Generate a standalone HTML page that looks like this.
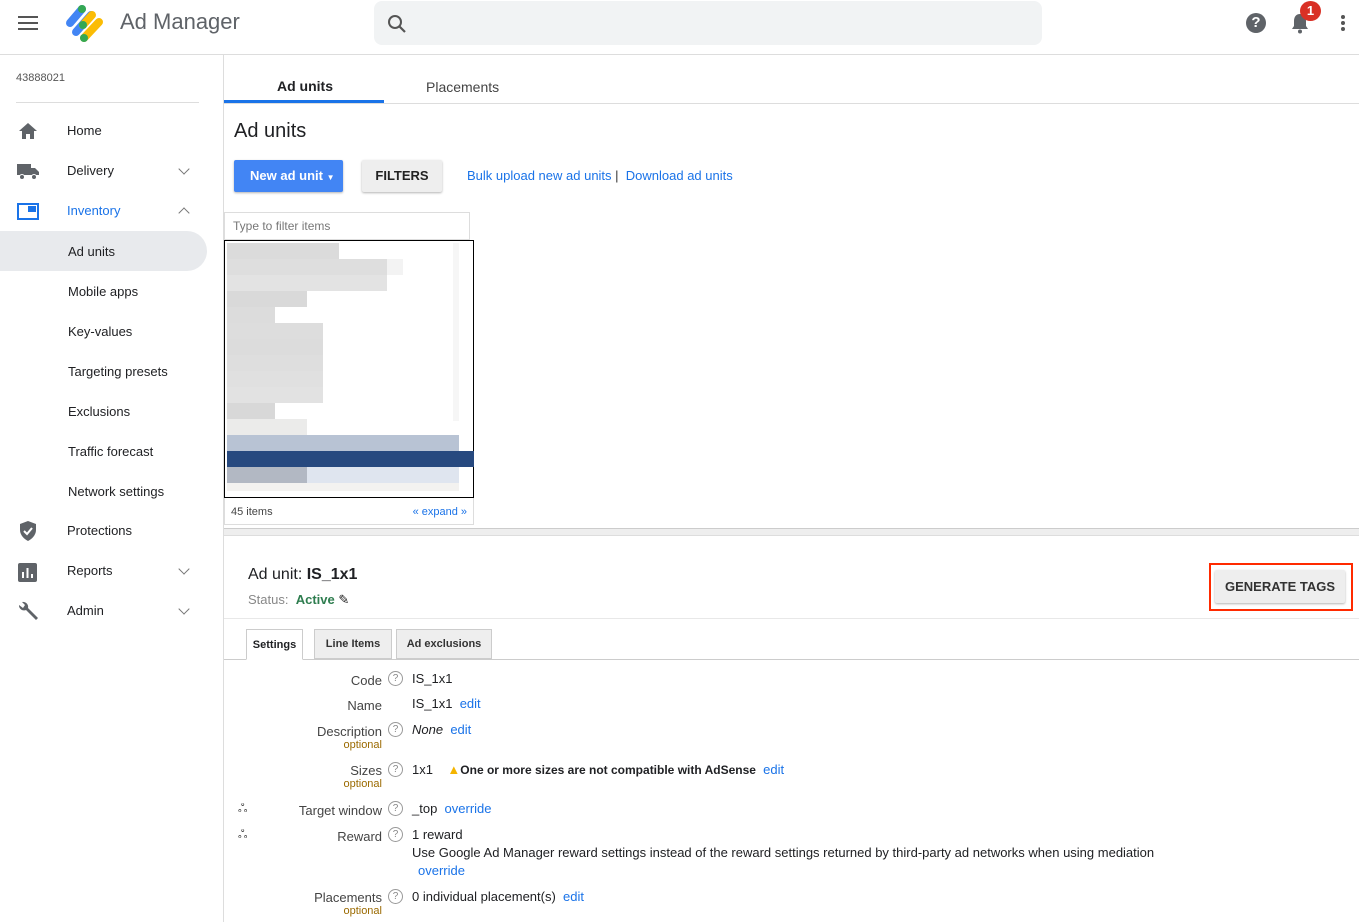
<!DOCTYPE html>
<html><head><meta charset="utf-8"><style>
*{box-sizing:border-box;margin:0;padding:0}
body{width:1359px;height:922px;overflow:hidden;background:#fff;font-family:"Liberation Sans",Arial,sans-serif;color:#202124;position:relative}
.a{position:absolute}
.nav{position:absolute;left:67px;font-size:13px;color:#202124}
.sub{position:absolute;left:68px;font-size:13px;color:#202124}
.chev{position:absolute;left:180px;width:8px;height:8px;border-right:1.5px solid #777;border-bottom:1.5px solid #777;transform:rotate(45deg)}
.blk{position:absolute;height:16px}
.lbl{position:absolute;right:977px;font-size:13px;color:#444;text-align:right}
.opt{position:absolute;right:977px;font-size:11px;color:#9b6a00}
.q{position:absolute;left:388px;width:15px;height:15px;border:1px solid #999;border-radius:50%;font-size:10px;color:#888;text-align:center;line-height:13px}
.val{position:absolute;left:412px;font-size:13px;color:#202124}
.lnk{color:#1a73e8}
</style></head><body>
<div class="a" style="left:18px;top:16px;width:20px;height:2px;background:#555;box-shadow:0 6px 0 #555,0 12px 0 #555"></div>
<svg class="a" style="left:62px;top:2px" width="44" height="42" viewBox="0 0 44 42">
<line x1="8" y1="21" x2="20" y2="7" stroke="#4285f4" stroke-width="8" stroke-linecap="round"/>
<line x1="14" y1="30" x2="29" y2="13" stroke="#4285f4" stroke-width="8" stroke-linecap="round"/>
<line x1="22" y1="36" x2="37" y2="20" stroke="#fbbc04" stroke-width="8" stroke-linecap="round"/>
<line x1="21" y1="23" x2="30" y2="13" stroke="#fbbc04" stroke-width="8" stroke-linecap="round"/>
<circle cx="20" cy="7" r="4" fill="#34a853"/><circle cx="21" cy="23" r="4" fill="#34a853"/><circle cx="22" cy="36" r="4" fill="#34a853"/>
</svg>
<div class="a" style="left:120px;top:9px;font-size:22px;color:#5f6368">Ad Manager</div>
<div class="a" style="left:374px;top:1px;width:668px;height:44px;background:#f1f3f4;border-radius:8px"></div>
<svg class="a" style="left:387px;top:14px" width="20" height="20" viewBox="0 0 20 20"><circle cx="8" cy="8" r="6" fill="none" stroke="#555" stroke-width="2"/><line x1="12.5" y1="12.5" x2="18" y2="18" stroke="#555" stroke-width="2.2"/></svg>
<div class="a" style="left:1246px;top:13px;width:20px;height:20px;border-radius:50%;background:#5f6368;color:#fff;font-weight:bold;font-size:15px;text-align:center;line-height:20px">?</div>
<svg class="a" style="left:1289px;top:11px" width="22" height="24" viewBox="0 0 22 24"><path d="M11 3c-4 0-6 3-6 7v5l-2 3h16l-2-3v-5c0-4-2-7-6-7z" fill="#5f6368"/><circle cx="11" cy="20.5" r="2" fill="#5f6368"/></svg>
<div class="a" style="left:1300px;top:1px;width:21px;height:20px;border-radius:50%;background:#d93025;color:#fff;font-size:13px;font-weight:bold;text-align:center;line-height:20px">1</div>
<div class="a" style="left:1341px;top:15px;width:4px;height:4px;border-radius:50%;background:#555;box-shadow:0 6px 0 #555,0 12px 0 #555"></div>
<div class="a" style="left:0;top:54px;width:1359px;height:1px;background:#ddd"></div>
<div class="a" style="left:223px;top:55px;width:1px;height:867px;background:#ddd"></div>
<div class="a" style="left:16px;top:72px;font-size:11px;color:#555">43888021</div>
<div class="a" style="left:16px;top:102px;width:183px;height:1px;background:#ddd"></div>
<svg class="a" style="left:18px;top:122px" width="20" height="18" viewBox="0 0 20 18"><path d="M10 1L1 9h3v8h4v-5h4v5h4V9h3z" fill="#5f6368"/></svg>
<div class="nav" style="top:123px">Home</div>
<svg class="a" style="left:16px;top:162px" width="24" height="18" viewBox="0 0 24 18"><rect x="1" y="2" width="14" height="11" fill="#5f6368"/><path d="M15 6h4l4 4v3h-8z" fill="#5f6368"/><circle cx="6" cy="15" r="2.5" fill="#5f6368" stroke="#fff"/><circle cx="18" cy="15" r="2.5" fill="#5f6368" stroke="#fff"/></svg>
<div class="nav" style="top:163px">Delivery</div><div class="chev" style="top:165px"></div>
<div class="a" style="left:17px;top:203px;width:22px;height:17px;border:2px solid #1a73e8"></div>
<div class="a" style="left:28px;top:206px;width:8px;height:6px;background:#1a73e8"></div>
<div class="nav" style="top:203px;color:#1a73e8">Inventory</div><div class="chev" style="top:209px;transform:rotate(225deg)"></div>
<div class="a" style="left:0;top:231px;width:207px;height:40px;background:#e8eaed;border-radius:0 20px 20px 0"></div>
<div class="sub" style="top:244px">Ad units</div>
<div class="sub" style="top:284px">Mobile apps</div>
<div class="sub" style="top:324px">Key-values</div>
<div class="sub" style="top:364px">Targeting presets</div>
<div class="sub" style="top:404px">Exclusions</div>
<div class="sub" style="top:444px">Traffic forecast</div>
<div class="sub" style="top:484px">Network settings</div>
<svg class="a" style="left:18px;top:520px" width="20" height="22" viewBox="0 0 20 22"><path d="M10 1L2 4v6c0 5 4 9 8 11 4-2 8-6 8-11V4z" fill="#5f6368"/><path d="M6 11l3 3 5-6" stroke="#fff" stroke-width="2" fill="none"/></svg>
<div class="nav" style="top:523px">Protections</div>
<svg class="a" style="left:18px;top:563px" width="19" height="19" viewBox="0 0 19 19"><rect width="19" height="19" rx="2" fill="#5f6368"/><rect x="4" y="9" width="2" height="6" fill="#fff"/><rect x="8.5" y="5" width="2" height="10" fill="#fff"/><rect x="13" y="11" width="2" height="4" fill="#fff"/></svg>
<div class="nav" style="top:563px">Reports</div><div class="chev" style="top:565px"></div>
<svg class="a" style="left:16px;top:601px" width="24" height="22" viewBox="0 0 24 22"><path d="M3 4a5 5 0 0 0 7 5l10 10 2-2L12 7a5 5 0 0 0-6-6l3 3-2 3z" fill="#5f6368"/></svg>
<div class="nav" style="top:603px">Admin</div><div class="chev" style="top:605px"></div>
<div class="a" style="left:224px;top:103px;width:1135px;height:1px;background:#ddd"></div>
<div class="a" style="left:277px;top:78px;font-size:14px;font-weight:bold;color:#202124">Ad units</div>
<div class="a" style="left:224px;top:100px;width:160px;height:3px;background:#1a73e8"></div>
<div class="a" style="left:426px;top:79px;font-size:14px;color:#444">Placements</div>
<div class="a" style="left:234px;top:120px;font-size:20px;color:#202124">Ad units</div>
<div class="a" style="left:234px;top:160px;width:109px;height:32px;background:#4285f4;border-radius:2px;box-shadow:0 1px 2px rgba(0,0,0,.3);color:#fff;font-weight:bold;font-size:13px;line-height:31px;padding-left:16px">New ad unit <span style="font-size:8px">▼</span></div>
<div class="a" style="left:362px;top:160px;width:80px;height:32px;background:#eee;border-radius:2px;box-shadow:0 1px 2px rgba(0,0,0,.3);font-weight:bold;font-size:13px;line-height:31px;text-align:center;color:#222">FILTERS</div>
<div class="a" style="left:467px;top:168px;font-size:13px;color:#1a73e8">Bulk upload new ad units <span style="color:#333">|</span>&nbsp; Download ad units</div>
<div class="a" style="left:224px;top:212px;width:246px;height:28px;border:1px solid #ddd;font-size:12px;color:#777;padding:6px 8px">Type to filter items</div>
<div class="a" style="left:224px;top:240px;width:250px;height:258px;border:1px solid #000;background:#fff"></div>
<div class="blk" style="left:227px;top:243px;width:112px;background:#dbdbdb"></div>
<div class="blk" style="left:227px;top:259px;width:160px;background:#dedede"></div>
<div class="blk" style="left:387px;top:259px;width:16px;background:#f3f3f3"></div>
<div class="blk" style="left:227px;top:275px;width:160px;background:#e3e3e3"></div>
<div class="blk" style="left:227px;top:291px;width:80px;background:#d9d9d9"></div>
<div class="blk" style="left:227px;top:307px;width:48px;background:#dcdcdc"></div>
<div class="blk" style="left:227px;top:323px;width:96px;background:#dddddd"></div>
<div class="blk" style="left:227px;top:339px;width:96px;background:#dcdcdc"></div>
<div class="blk" style="left:227px;top:355px;width:96px;background:#dedede"></div>
<div class="blk" style="left:227px;top:371px;width:96px;background:#e0e0e0"></div>
<div class="blk" style="left:227px;top:387px;width:96px;background:#e2e2e2"></div>
<div class="blk" style="left:227px;top:403px;width:48px;background:#d8d8d8"></div>
<div class="blk" style="left:227px;top:419px;width:80px;background:#ebebea"></div>
<div class="blk" style="left:227px;top:435px;width:232px;background:#b8c3d4"></div>
<div class="blk" style="left:227px;top:451px;width:247px;background:#27497f"></div>
<div class="blk" style="left:227px;top:467px;width:232px;background:#dfe5ef"></div>
<div class="blk" style="left:227px;top:467px;width:80px;background:#b2b8c3"></div>
<div class="a" style="left:227px;top:483px;width:232px;height:8px;background:#f3f2f0"></div>
<div class="a" style="left:453px;top:243px;width:6px;height:178px;background:#f6f6f6"></div>
<div class="a" style="left:224px;top:498px;width:250px;height:27px;border:1px solid #ddd;border-top:none;font-size:11px;color:#444;padding:8px 6px">45 items<span style="float:right;color:#1a73e8">« expand »</span></div>
<div class="a" style="left:224px;top:528px;width:1135px;height:8px;background:#eee;border-top:1px solid #ccc;border-bottom:1px solid #ddd"></div>
<div class="a" style="left:248px;top:566px;font-size:16px">Ad unit: <b>IS_1x1</b></div>
<div class="a" style="left:248px;top:592px;font-size:13px;color:#888">Status: &nbsp;<b style="color:#2e7d4f">Active</b> <span style="color:#222">✎</span></div>
<div class="a" style="left:1209px;top:563px;width:144px;height:48px;border:2px solid #ff2a00"></div>
<div class="a" style="left:1215px;top:570px;width:130px;height:33px;background:#eee;box-shadow:0 1px 2px rgba(0,0,0,.3);border-radius:2px;font-size:13px;font-weight:bold;color:#333;text-align:center;line-height:33px">GENERATE TAGS</div>
<div class="a" style="left:224px;top:618px;width:1135px;height:1px;background:#e8e8e8"></div>
<div class="a" style="left:224px;top:659px;width:1135px;height:1px;background:#ccc"></div>
<div class="a" style="left:246px;top:629px;width:57px;height:31px;border:1px solid #ccc;border-bottom:1px solid #fff;background:#fff;font-size:11px;font-weight:bold;text-align:center;line-height:30px">Settings</div>
<div class="a" style="left:314px;top:629px;width:78px;height:30px;border:1px solid #ccc;background:#eee;font-size:11px;font-weight:bold;text-align:center;line-height:28px;color:#333">Line Items</div>
<div class="a" style="left:396px;top:629px;width:96px;height:30px;border:1px solid #ccc;background:#eee;font-size:11px;font-weight:bold;text-align:center;line-height:28px;color:#333">Ad exclusions</div>
<div class="lbl" style="top:673px">Code</div><div class="q" style="top:671px">?</div><div class="val" style="top:671px">IS_1x1</div>
<div class="lbl" style="top:698px">Name</div><div class="val" style="top:696px">IS_1x1 &nbsp;<span class="lnk">edit</span></div>
<div class="lbl" style="top:724px">Description</div><div class="opt" style="top:739px">optional</div><div class="q" style="top:722px">?</div><div class="val" style="top:722px"><i>None</i> &nbsp;<span class="lnk">edit</span></div>
<div class="lbl" style="top:763px">Sizes</div><div class="opt" style="top:778px">optional</div><div class="q" style="top:762px">?</div><div class="val" style="top:762px">1x1 &nbsp;&nbsp;&nbsp;<span style="color:#f4b400">▲</span><b style="font-size:12px">One or more sizes are not compatible with AdSense</b> &nbsp;<span class="lnk">edit</span></div>
<div class="a" style="left:238px;top:801px;font-size:12px;color:#333">ஃ</div>
<div class="lbl" style="top:803px">Target window</div><div class="q" style="top:801px">?</div><div class="val" style="top:801px">_top &nbsp;<span class="lnk">override</span></div>
<div class="a" style="left:238px;top:827px;font-size:12px;color:#333">ஃ</div>
<div class="lbl" style="top:829px">Reward</div><div class="q" style="top:827px">?</div><div class="val" style="top:827px">1 reward</div>
<div class="val" style="top:845px">Use Google Ad Manager reward settings instead of the reward settings returned by third-party ad networks when using mediation</div>
<div class="val" style="top:863px;left:418px"><span class="lnk">override</span></div>
<div class="lbl" style="top:890px">Placements</div><div class="opt" style="top:905px">optional</div><div class="q" style="top:889px">?</div><div class="val" style="top:889px">0 individual placement(s) &nbsp;<span class="lnk">edit</span></div>
</body></html>
